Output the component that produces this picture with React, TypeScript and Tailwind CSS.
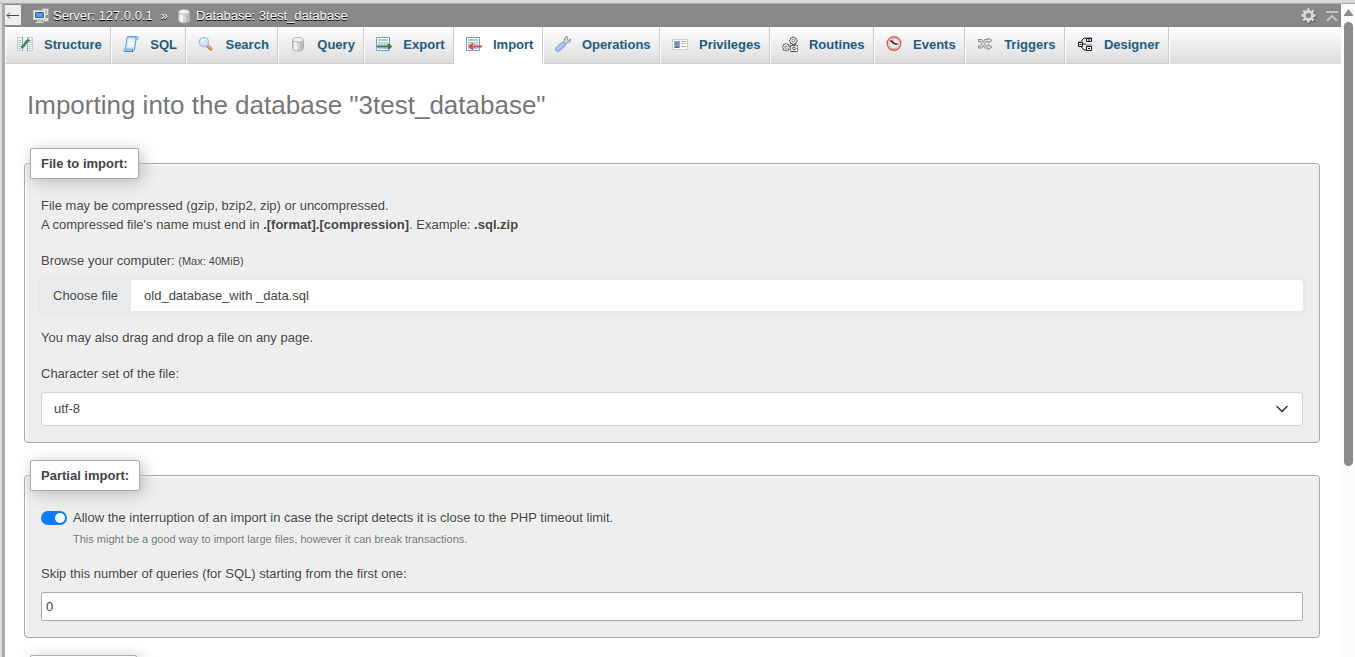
import React from 'react';

interface IconProps {
  children: React.ReactNode;
  className?: string;
}

const Icon: React.FC<IconProps> = ({ children, className = '' }) => (
  <svg viewBox="0 0 16 16" className={`w-4 h-4 shrink-0 ${className}`} fill="none" aria-hidden="true">
    {children}
  </svg>
);

const ServerIcon = () => (
  <Icon>
    <path d="M9.500.5h6v13h-6z" fill="#e3e3e3" stroke="#a5a5a5" />
    <path d="M11 3h3M11 5h3" stroke="#777" />
    <path d="M13 7h2v3h-2z" fill="#58b947" />
    <path d="M.5 2.500h12v9H.500z" fill="#f1f1ee" stroke="#c5c8cc" />
    <path d="M2.500 4.500h8v5h-8z" fill="#5b97dc" stroke="#2a5eaa" />
    <path d="M4 12h5v2H4z" fill="#b9b9b9" />
    <path d="M2.500 14.500h8" stroke="#dadada" />
  </Icon>
);

const DatabaseIcon = () => (
  <Icon>
    <path d="M2.500 4v8.500c0 1.400 2.500 2.500 5.500 2.500s5.500-1.100 5.500-2.500V4z" fill="#d5d5d5" stroke="#b0b0b0" />
    <path d="M4 5.500h3v9l-2-.5-1-1z" fill="#f5f5f5" />
    <path d="M10 6h3v7l-3 1.500z" fill="#bcbcbc" />
    <ellipse cx="8" cy="3.800" rx="5.500" ry="2.300" fill="#f3f3f3" stroke="#b5b5b5" />
  </Icon>
);

const StructureIcon = () => (
  <Icon>
    <path d="M.5 1.500h5v13h-5zM10.500 1.500h5v13h-5z" fill="#f5f9fe" stroke="#b9cde6" />
    <path d="M5.500 1v14M10.500 1v14" stroke="#7ca7e0" />
    <path d="M1.500 4.500h2.500M1.500 6.500h2.500M1.500 8.500h2.500M1.500 10.500h2.500M1.500 12.500h2.500M12 4.500h2.500M12 6.500h2.500M12 8.500h2.500M12 10.500h2.500M12 12.500h2.500" stroke="#a9c4c0" />
    <path d="M5 11l2-1.500 2.500-4 2-1" stroke="#46873c" strokeWidth="2.600" strokeLinecap="round" />
  </Icon>
);

const SqlIcon = () => (
  <Icon>
    <path d="M4.500.7h10c1.200 0 1.200 2.500-.4 2.500h-1L11.500 13c-.2 1.600-1 2.300-2 2.300H1.700c-1.400 0-1.400-2 0-2.200h.8L3.800 2.500C3.900 1.500 4 1 4.500.7z" fill="#d9ebfc" stroke="#5c99d6" />
    <path d="M4.500.8h8.500l-.5 2.300M2.500 13.100h7v2" stroke="#5c99d6" />
    <path d="M6 4.500h4.500M5.500 7h4.500M5.200 9.500h4.500" stroke="#fff" strokeWidth="1.400" />
    <path d="M1.500 15.300h8.500" stroke="#3d6f9f" />
  </Icon>
);

const SearchIcon = () => (
  <Icon>
    <path d="M9.500 10l3.500 3" stroke="#b98246" strokeWidth="3.200" strokeLinecap="round" />
    <path d="M10 10l3 2.500" stroke="#e3b67c" strokeWidth="1.200" strokeLinecap="round" />
    <circle cx="6" cy="6" r="4.600" fill="#cfe4fa" stroke="#a9bfdc" strokeWidth="1.400" />
    <path d="M3.500 5.500c.4-1.500 1.500-2.200 3-2.200" stroke="#fff" strokeWidth="1.400" strokeLinecap="round" />
  </Icon>
);

const SheetBase = () => (
  <>
    <path d="M.5 1.500h13v13H.500z" fill="#fff" stroke="#6f9bd8" />
    <path d="M2 4h10" stroke="#8cc27c" strokeWidth="1.400" />
    <path d="M2.500 6.500h9v6h-9z" fill="#eaf2fc" stroke="#a9c4e8" />
    <path d="M5.500 6.500v6M8.500 6.500v6M2.500 8.500h9" stroke="#a9c4e8" />
  </>
);

const ExportIcon = () => (
  <Icon>
    <SheetBase />
    <path d="M1 10.500h13M12 8l3 2.500-3 2.500" stroke="#3b832f" strokeWidth="1.800" />
  </Icon>
);

const ImportIcon = () => (
  <Icon>
    <SheetBase />
    <path d="M3.500 10.500H16M7 7.500l-3.500 3L7 13.500" stroke="#e84545" strokeWidth="1.800" />
  </Icon>
);

const WrenchIcon = () => (
  <Icon>
    <path d="M7.500 7.500l2-3c-.4-2 .8-4 3-4L12 2.500l.5 1.500 1.500.5 1.700-1.500c.3 2.500-1.600 4-3.700 3.600L9 9.500z" fill="#ddd" stroke="#8a8a8a" />
    <path d="M3 13l5-4.500" stroke="#7797d2" strokeWidth="5.400" strokeLinecap="round" />
    <path d="M3 12.800l5-4.500" stroke="#adc6f5" strokeWidth="3.600" strokeLinecap="round" />
  </Icon>
);

const PrivilegesIcon = () => (
  <Icon>
    <path d="M.5 3.500h15v10H.500z" fill="#fff" stroke="#ccc" />
    <path d="M2 5h6v7H2z" fill="#6eaef0" />
    <circle cx="5" cy="7.500" r="1.800" fill="#b77749" />
    <path d="M3 12c0-3 4-3 4 0z" fill="#476b9c" />
    <path d="M9.500 5.500h4.500M9.500 7.500h2M12.500 7.500h1.500M9.500 10.500h4.500" stroke="#aaa" />
  </Icon>
);

const RoutinesIcon = () => (
  <Icon>
    <path d="M11.300.6l1.200 1.500h1.600v1.500l1.400 1.200-1.400 1.200v1.500h-1.600l-1.200 1.200-1.200-1.200H8.500V6L7.200 4.800l1.300-1.200V2.100h1.600z" fill="#f2f2f2" stroke="#555" />
    <circle cx="11.300" cy="4.700" r="1.300" fill="#fff" stroke="#666" strokeWidth=".8" />
    <path d="M4 7.200l1.200 1.300h1.600V10L8 11.300l-1.200 1.200V14H5.200L4 15.300 2.800 14H1.300v-1.500L.3 11.300 1.300 10V8.500h1.500z" fill="#f2f2f2" stroke="#555" />
    <circle cx="4" cy="11.300" r="1.200" fill="#fff" stroke="#666" strokeWidth=".8" />
    <path d="M8.500 9.500h7v6h-7z" fill="#f2f2f2" stroke="#444" strokeDasharray="2 1" />
    <path d="M10 8.800h4M10 15.500h4" stroke="#444" />
    <circle cx="12" cy="12.400" r="1.300" fill="#fff" stroke="#444" />
  </Icon>
);

const EventsIcon = () => (
  <Icon>
    <circle cx="8" cy="7.500" r="6.800" fill="#fff" stroke="#e25555" strokeWidth="1.400" />
    <circle cx="8" cy="7.500" r="5.200" fill="#eaeaea" stroke="#b9b9b9" />
    <path d="M8 7.500L3.500 5.500 7.500 3z" fill="#f19a9a" />
    <path d="M4.500 4.500l3.500 3 3.500.8" stroke="#222" strokeWidth="1.500" />
  </Icon>
);

const TriggersIcon = () => (
  <Icon>
    <path d="M1 4.500h3l4.500 6.500H12M1 11h3l4.500-6.500H12" stroke="#8a8a8a" strokeWidth="3" />
    <path d="M11 2l4 2.500L11 7zM11 8.500l4 2.500-4 2.500z" fill="#e2e2e2" stroke="#8a8a8a" />
    <path d="M2 4.500h2l4.500 6.500H12M2 11h2l4.500-6.500H12" stroke="#e8e8e8" strokeWidth="1.200" />
  </Icon>
);

const DesignerIcon = () => (
  <Icon>
    <path d="M4 5.500L7 2h2M5 8h4M4 10.500L7 14h2" stroke="#111" />
    <path d="M9 1h6v2H9zM9 8h6v2H9zM1 5h5v2H1z" fill="#a3a0d6" />
    <path d="M9.500 2.500h5v3h-5zM9.500 10.500h5v4h-5zM1.500 6.500h4v4h-4z" fill="#fff" stroke="#111" />
    <path d="M11 4h2M11 12.500h2M2.500 8.500h2" stroke="#111" />
  </Icon>
);

const GearIcon = () => (
  <Icon>
    <g transform="translate(1 1)" stroke="#5c5c5c">
      <circle cx="7.500" cy="7.500" r="4" strokeWidth="3" />
      <path d="M7.500.2v3M7.500 11.800v3M.2 7.500h3M11.800 7.500h3M2.300 2.300l2 2M10.700 10.700l2 2M12.700 2.300l-2 2M4.300 10.700l-2 2" strokeWidth="2.400" />
    </g>
    <circle cx="7.500" cy="7.500" r="4" stroke="#d8d8d8" strokeWidth="3" />
    <path d="M7.500.2v3M7.500 11.800v3M.2 7.500h3M11.800 7.500h3M2.300 2.300l2 2M10.700 10.700l2 2M12.700 2.300l-2 2M4.300 10.700l-2 2" stroke="#d8d8d8" strokeWidth="2.400" />
    <circle cx="7.500" cy="7.500" r="2.400" fill="#888" />
  </Icon>
);

const tabs = [
  { label: 'Structure', icon: <StructureIcon /> },
  { label: 'SQL', icon: <SqlIcon /> },
  { label: 'Search', icon: <SearchIcon /> },
  { label: 'Query', icon: <DatabaseIcon /> },
  { label: 'Export', icon: <ExportIcon /> },
  { label: 'Import', icon: <ImportIcon />, active: true },
  { label: 'Operations', icon: <WrenchIcon /> },
  { label: 'Privileges', icon: <PrivilegesIcon /> },
  { label: 'Routines', icon: <RoutinesIcon /> },
  { label: 'Events', icon: <EventsIcon /> },
  { label: 'Triggers', icon: <TriggersIcon /> },
  { label: 'Designer', icon: <DesignerIcon /> },
];

const Breadcrumb = () => (
  <header className="flex items-center h-[23px] bg-[#888] text-white">
    <button type="button" aria-label="Hide navigation panel" className="flex items-center justify-center w-4 h-5 mb-[2px] bg-[#eee]">
      <svg viewBox="0 0 14 10" className="w-[14px] h-[10px]" fill="none" stroke="#444">
        <path d="M1 5.500h12M4 2.500l-3 3 3 3" />
      </svg>
    </button>
    <nav className="flex items-center ml-3 [text-shadow:0_1px_0_#000]">
      <a href="#server" className="flex items-center gap-1">
        <ServerIcon />
        Server: 127.0.0.1
      </a>
      <span className="mx-2">»</span>
      <a href="#database" className="flex items-center gap-1">
        <DatabaseIcon />
        Database: 3test_database
      </a>
    </nav>
    <div className="flex items-center gap-[9px] ml-auto pr-[3px]">
      <button type="button" aria-label="Page-related settings">
        <GearIcon />
      </button>
      <button type="button" aria-label="Scroll to top">
        <svg viewBox="0 0 12 12" className="w-3 h-3" fill="none" stroke="#c4c4c4" strokeWidth="2">
          <path d="M0 2h12M1 11l5-5 5 5" />
        </svg>
      </button>
    </div>
  </header>
);

const TabBar = () => (
  <nav className="flex h-[37px] bg-linear-to-b from-white to-[#dcdcdc]">
    <div className="flex w-[1164px]">
      {tabs.map((tab) => (
        <a
          key={tab.label}
          href={`#${tab.label.toLowerCase()}`}
          className={`flex flex-auto items-center gap-[11px] pl-[11px] pr-2 pb-[2px] font-bold text-[#235a81] border-l border-l-white border-r border-r-[#ccc] border-b ${
            tab.active ? 'bg-white border-b-white' : 'border-b-[#ccc]'
          }`}
        >
          {tab.icon}
          {tab.label}
        </a>
      ))}
    </div>
    <div className="flex-1 border-l border-l-white border-b border-b-[#ddd]" />
  </nav>
);

interface SectionProps {
  title: string;
  children?: React.ReactNode;
}

const Section: React.FC<SectionProps> = ({ title, children }) => (
  <fieldset className="min-w-0 mb-[17px] px-4 pb-4 bg-[#eee] border border-[#aaa] rounded-[4px] shadow-[inset_1px_1px_2px_#fff] [text-shadow:1px_1px_2px_#fff]">
    <legend className="-ml-[11px] mb-[17px] px-[10px] py-[5px] leading-[19px] font-bold bg-white border border-[#aaa] rounded-[2px] shadow-[3px_3px_15px_#bbb]">
      {title}
    </legend>
    {children}
  </fieldset>
);

const Scrollbar = () => (
  <div className="flex flex-col items-center w-[14px] pt-[5px] shrink-0 bg-[#fcfcfc]" aria-hidden="true">
    <svg viewBox="0 0 9 7" className="w-[9px] h-[7px]">
      <path d="M4.500 0L9 6v1H0V6z" fill="#8b8b8b" />
    </svg>
    <div className="w-[9px] h-[444px] mt-[6px] rounded-full bg-[#8b8b8b]" />
  </div>
);

export default function App() {
  return (
    <div className="flex flex-col h-screen bg-white text-[#444] text-[13px] leading-[19px] font-['Liberation_Sans',Arial,sans-serif]">
      <div className="h-1 shrink-0 bg-[#d8d8d6] border-b border-b-[#aaa]" />
      <div className="flex flex-1 min-h-0">
        <div className="w-[5px] shrink-0 bg-[#aaa] border-l-2 border-l-[#dcdcdc]" />
        <div className="flex-1 min-w-0 overflow-y-auto [scrollbar-width:none]">
          <Breadcrumb />
          <TabBar />

          <main className="pl-[19px] pr-[21px]">
            <h1 className="pt-[25px] pb-[27px] pl-[3px] text-[26px] leading-8 text-[#777]">
              Importing into the database "3test_database"
            </h1>

            <Section title="File to import:">
              <p>File may be compressed (gzip, bzip2, zip) or uncompressed.</p>
              <p>
                A compressed file's name must end in <strong>.[format].[compression]</strong>. Example: <strong>.sql.zip</strong>
              </p>

              <label htmlFor="import-file" className="block mt-[17px]">
                Browse your computer: <small className="text-[11px]">(Max: 40MiB)</small>
              </label>
              <input id="import-file" type="file" className="sr-only" />
              <label
                htmlFor="import-file"
                className="flex items-center h-[31px] mt-[9px] bg-white rounded-[4px] overflow-hidden shadow-[0_0_0_4px_#e9e9e9]"
              >
                <span className="pl-3 pr-[13px] py-[6px] bg-[#e9ecef]">Choose file</span>
                <span className="px-[13px]">old_database_with _data.sql</span>
              </label>

              <p className="mt-[17px]">You may also drag and drop a file on any page.</p>

              <label htmlFor="charset" className="block mt-[17px]">
                Character set of the file:
              </label>
              <div className="relative mt-[9px]">
                <select
                  id="charset"
                  defaultValue="utf-8"
                  className="block w-full h-[34px] px-3 pb-[2px] appearance-none bg-white border border-[#ced4da] rounded-[4px]"
                >
                  <option>utf-8</option>
                </select>
                <svg
                  viewBox="0 0 16 16"
                  className="absolute right-[13px] top-[9px] w-4 h-4 pointer-events-none"
                  fill="none"
                  stroke="#343a40"
                  strokeWidth="1.600"
                  strokeLinecap="round"
                  strokeLinejoin="round"
                >
                  <path d="M3 5.500l5 5 5-5" />
                </svg>
              </div>
            </Section>

            <Section title="Partial import:">
              <div className="flex items-center gap-[6px]">
                <input
                  id="allow-interrupt"
                  type="checkbox"
                  role="switch"
                  defaultChecked
                  className="appearance-none w-[26px] h-[14px] shrink-0 rounded-full bg-[#0d7bfd] before:block before:w-[10px] before:h-[10px] before:m-[2px] before:rounded-full before:bg-white checked:before:ml-[14px]"
                />
                <label htmlFor="allow-interrupt">
                  Allow the interruption of an import in case the script detects it is close to the PHP timeout limit.
                </label>
              </div>
              <p className="mt-1 ml-8 text-[11px] leading-[17px] text-[#6c757d]">
                This might be a good way to import large files, however it can break transactions.
              </p>

              <label htmlFor="skip-queries" className="block mt-4">
                Skip this number of queries (for SQL) starting from the first one:
              </label>
              <input
                id="skip-queries"
                type="text"
                inputMode="numeric"
                defaultValue="0"
                className="block w-full h-[29px] mt-[9px] px-1 bg-white border border-[#aaa] rounded-[2px]"
              />
            </Section>

            <Section title="Other options" />
          </main>
        </div>
        <Scrollbar />
      </div>
    </div>
  );
}
